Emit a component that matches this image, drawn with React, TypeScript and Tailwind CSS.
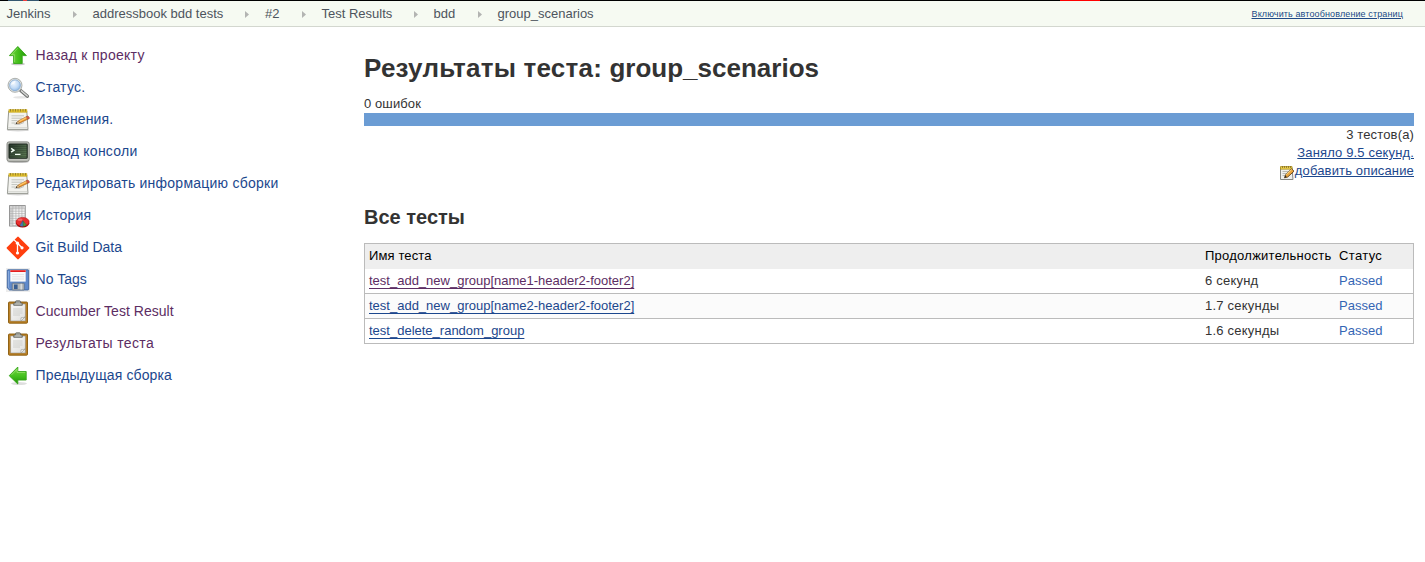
import type { ReactNode } from 'react';

function UpArrow() {
  return (
    <svg className="size-6" viewBox="0 0 24 24">
      <defs>
        <linearGradient id="green-up" x1="0" y1="0" x2="1" y2="0">
          <stop offset="0" stopColor="#7bd548" />
          <stop offset="0.5" stopColor="#45c01c" />
          <stop offset="1" stopColor="#239b08" />
        </linearGradient>
      </defs>
      <ellipse cx="12" cy="20" rx="7" ry="1.3" fill="#000" opacity="0.22" />
      <path d="M11.8 2.5 20.4 11.6H16.2V19.5H7.6V11.6H3.4Z" fill="url(#green-up)" stroke="#35a51a" strokeWidth="0.9" strokeLinejoin="round" />
      <path d="M11.8 4.2 5.6 10.7H8.6V18" fill="none" stroke="#b1ef86" strokeWidth="0.7" opacity="0.7" />
    </svg>
  );
}

function LeftArrow() {
  return (
    <svg className="size-6" viewBox="0 0 24 24">
      <defs>
        <linearGradient id="green-left" x1="0" y1="0" x2="0" y2="1">
          <stop offset="0" stopColor="#7bd648" />
          <stop offset="0.55" stopColor="#43c01d" />
          <stop offset="1" stopColor="#219107" />
        </linearGradient>
      </defs>
      <ellipse cx="13" cy="19.6" rx="8" ry="1.5" fill="#000" opacity="0.13" />
      <path d="M3.2 11.7 11.8 3V7.5H20.2V16H11.8V20Z" fill="url(#green-left)" stroke="#36a51a" strokeWidth="0.9" strokeLinejoin="round" />
      <path d="M5.2 11.2 11 5.3V8.4H19.2" fill="none" stroke="#b1ef86" strokeWidth="0.7" opacity="0.8" />
    </svg>
  );
}

function Magnifier() {
  return (
    <svg className="size-6" viewBox="0 0 24 24">
      <defs>
        <radialGradient id="lens" cx="0.4" cy="0.35" r="0.7">
          <stop offset="0" stopColor="#eef6ff" />
          <stop offset="0.6" stopColor="#c1daf5" />
          <stop offset="1" stopColor="#8bb6e6" />
        </radialGradient>
      </defs>
      <ellipse cx="15" cy="21.3" rx="8" ry="1.3" fill="#000" opacity="0.1" />
      <path d="M14.6 14.5 21.4 20.3" stroke="#6c6e6c" strokeWidth="3.2" strokeLinecap="round" />
      <path d="M15.4 14.9 21.3 20" stroke="#d4d5d3" strokeWidth="1.5" strokeLinecap="round" />
      <circle cx="9" cy="9.3" r="7" fill="#dfe2e0" stroke="#9da19e" strokeWidth="0.8" />
      <circle cx="9" cy="9.3" r="5.4" fill="url(#lens)" stroke="#7ea5d0" strokeWidth="0.7" />
      <path d="M4.8 8.9Q6 5.1 9.8 4.8Q9 8.1 4.8 8.9Z" fill="#fff" opacity="0.75" />
    </svg>
  );
}

function Notepad() {
  return (
    <svg className="size-6" viewBox="0 0 24 24">
      <ellipse cx="12" cy="22.4" rx="11" ry="1" fill="#000" opacity="0.14" />
      <path d="M2.7 3H20.8L22 21.6H1.4Z" fill="#f3f3ef" stroke="#8b8d87" strokeWidth="0.9" strokeLinejoin="round" />
      <path d="M1.6 19.8H21.8" stroke="#c4c5c0" strokeWidth="0.8" />
      <path d="M2.8 1.5H21V4.4H2.8Z" fill="#e3c22d" stroke="#c29f12" strokeWidth="0.4" />
      <path d="M4.5 1V3.5M7 1V3.5M9.5 1V3.5M12 1V3.5M14.5 1V3.5M17 1V3.5M19.5 1V3.5" stroke="#8c7728" strokeWidth="0.8" />
      <path d="M5.5 7.8H18M5.5 10.2H16M5.5 12.6H11.5M5.5 15H9.5" stroke="#b5b7b1" strokeWidth="0.8" />
      <path d="M8.5 16.3Q13 17.5 18 14.5" stroke="#888a85" strokeWidth="1" fill="none" opacity="0.45" />
      <path d="M10.4 15.3 12.3 12.9 21.4 8.2 22.8 10.7 13.5 15.2Z" fill="#ee982c" stroke="#955716" strokeWidth="0.6" />
      <path d="M12.5 13.2 21.4 8.6 21.9 9.6 12.9 14.2Z" fill="#ffca70" />
      <path d="M20.3 8.8 21.9 8Q23.6 8.8 23.4 10.4L21.6 11.3Z" fill="#d95b49" stroke="#93392f" strokeWidth="0.4" />
      <path d="M10.2 15.4 12.3 12.9 13.5 15.2Z" fill="#ecd2a1" stroke="#80582f" strokeWidth="0.4" />
      <circle cx="10.5" cy="15.2" r="0.6" fill="#222" />
    </svg>
  );
}

function Terminal() {
  return (
    <svg className="size-6" viewBox="0 0 24 24">
      <defs>
        <linearGradient id="screen" x1="0" y1="0" x2="1" y2="0.5">
          <stop offset="0" stopColor="#26352b" />
          <stop offset="1" stopColor="#55714f" />
        </linearGradient>
      </defs>
      <ellipse cx="12" cy="21.8" rx="11" ry="1.3" fill="#000" opacity="0.25" />
      <rect x="1" y="1.9" width="22.2" height="19.4" rx="2" fill="#c5c7c1" stroke="#7c7e78" strokeWidth="0.9" />
      <rect x="3" y="4" width="18.2" height="14.2" rx="0.7" fill="url(#screen)" stroke="#1a241c" strokeWidth="1.1" />
      <path d="M3.5 6.5H20.7M3.5 8.5H20.7M3.5 10.5H20.7M3.5 12.5H20.7M3.5 14.5H20.7M3.5 16.5H20.7" stroke="#10190f" strokeWidth="0.7" opacity="0.3" />
      <path d="M5.1 8.3 7.9 10.2 5.1 12.1" fill="none" stroke="#f4fff5" strokeWidth="1.5" />
      <path d="M9 14.4H14.5" stroke="#f4fff5" strokeWidth="1.2" />
    </svg>
  );
}

function History() {
  return (
    <svg className="size-6" viewBox="0 0 24 24">
      <rect x="3.6" y="1.6" width="15.6" height="20.4" fill="#f5f5f5" stroke="#858585" strokeWidth="0.9" />
      <path d="M4 2H18.8V4.5H4ZM4 2H6.7V21.6H4Z" fill="#d2d2d2" />
      <path d="M4 4.8H19M4 7.2H19M4 9.6H19M4 12H19M4 14.4H19M4 16.8H19M4 19.2H19M6.9 2V22M9.9 2V22M12.9 2V22M15.9 2V22" stroke="#aaa" strokeWidth="0.6" />
      <ellipse cx="16.6" cy="19.2" rx="6.6" ry="4.2" fill="#a40000" />
      <ellipse cx="16.6" cy="17.9" rx="6.6" ry="4.5" fill="#e83030" stroke="#a90707" strokeWidth="0.5" />
      <path d="M16.8 16.8 20.5 21Q18.8 22.3 17 22.3Z" fill="#4f9b3d" stroke="#2d6a29" strokeWidth="0.4" />
      <path d="M16.8 16.8 17 22.3Q15.3 22.5 13.8 21.8Z" fill="#4578b7" stroke="#284f88" strokeWidth="0.4" />
      <ellipse cx="14" cy="15.7" rx="2.6" ry="1.2" fill="#ff8989" opacity="0.6" />
    </svg>
  );
}

function Git() {
  return (
    <svg className="size-6" viewBox="0 0 24 24">
      <rect x="3.7" y="3.7" width="16.6" height="16.6" rx="1" fill="#ff3f0f" transform="rotate(45 12 12)" />
      <path d="M7.9 3.6 11.5 7.2V17M11.5 7.2 16 11.7" fill="none" stroke="#fff" strokeWidth="1.3" />
      <circle cx="11.5" cy="7.2" r="1.6" fill="#fff" />
      <circle cx="16" cy="11.8" r="1.6" fill="#fff" />
      <circle cx="11.5" cy="17" r="1.6" fill="#fff" />
    </svg>
  );
}

function Floppy() {
  return (
    <svg className="size-6" viewBox="0 0 24 24">
      <rect width="24" height="24" fill="#ececec" />
      <path d="M2 1.8H22Q22.7 1.8 22.7 2.6V21.2Q22.7 22 22 22H3.5L1.3 20V2.6Q1.3 1.8 2 1.8Z" fill="#608acb" stroke="#345b96" strokeWidth="0.8" />
      <path d="M2.4 3V19.2L4 20.8" fill="none" stroke="#a9c5ea" strokeWidth="0.6" />
      <rect x="4.3" y="2" width="15.4" height="11.6" fill="#fafafa" />
      <rect x="4.3" y="2.2" width="15.4" height="1.8" fill="#e51d1d" />
      <path d="M6 6.6H18M6 8.8H18M6 11H18" stroke="#d0d3d6" strokeWidth="0.6" />
      <rect x="6.2" y="15.2" width="12" height="6.8" rx="0.5" fill="#b4b8bb" stroke="#53667c" strokeWidth="0.7" />
      <rect x="8" y="16.5" width="3.6" height="4.6" fill="#385d91" />
      <path d="M15.2 15.7V21.5" stroke="#dfe3e4" strokeWidth="1.2" />
    </svg>
  );
}

function Clipboard({ id }: { id: string }) {
  return (
    <svg className="size-6" viewBox="0 0 24 24">
      <defs>
        <linearGradient id={id} x1="0" y1="0" x2="1" y2="1">
          <stop offset="0" stopColor="#fafafa" />
          <stop offset="1" stopColor="#dededb" />
        </linearGradient>
      </defs>
      <rect x="2.5" y="2" width="19" height="21.2" rx="0.9" fill="#bb8126" stroke="#875809" strokeWidth="0.9" />
      <path d="M4.6 4H19.4V21H4.6Z" fill={`url(#${id})`} stroke="#858681" strokeWidth="0.5" />
      <path d="M7 9H16.5M7 11H16.5M7 13H16.5M7 15H14" stroke="#cccdc9" strokeWidth="0.9" />
      <path d="M19.2 16.8 15 21V17.8Q17.2 18.2 19.2 16.8Z" fill="#fff" stroke="#8d8e89" strokeWidth="0.6" />
      <path d="M7.7 5.3V3.7Q7.7 3 8.6 3H9.5V1.8Q9.5 0.8 10.4 0.8H13.6Q14.5 0.8 14.5 1.8V3H15.4Q16.3 3 16.3 3.7V5.3Z" fill="#a0a29c" stroke="#5f615d" strokeWidth="0.8" />
      <path d="M8.6 4H15.4" stroke="#cfd1cc" strokeWidth="0.7" />
    </svg>
  );
}

function DescriptionIcon() {
  return (
    <svg className="size-4" viewBox="0 0 16 16">
      <path d="M1.5 2.5H13L14 14.5H1.5Z" fill="#eeeeeb" stroke="#858681" />
      <path d="M1.5 1.5H13V4.2H1.5Z" fill="#ecd04f" stroke="#a88a13" strokeWidth="0.7" />
      <path d="M3.5 1V3M5.5 1V3M7.5 1V3M9.5 1V3M11.5 1V3" stroke="#776321" strokeWidth="0.7" />
      <path d="M3.5 6.5H9M3.5 8.5H7.5M3.5 10.5H6" stroke="#aaaca7" strokeWidth="0.8" />
      <path d="M5.5 12.8 6.6 9.8 12.6 3.8 15 6.2 8.7 12Z" fill="#eaa53d" stroke="#5c4018" strokeWidth="0.9" />
      <path d="M7.2 9.7 12.8 4.4" stroke="#ffdc88" strokeWidth="0.9" />
      <path d="M5.5 12.8 6.3 10.6 7.7 12Z" fill="#292521" />
    </svg>
  );
}

const crumbs = [
  { label: 'Jenkins', width: 'w-[86px]' },
  { label: 'addressbook bdd tests', width: 'w-[172.5px]' },
  { label: '#2', width: 'w-[56.5px]' },
  { label: 'Test Results', width: 'w-[112px]' },
  { label: 'bdd', width: 'w-[64px]' },
];

function Breadcrumbs() {
  return (
    <header className="h-[27px] border-t border-b border-t-black border-b-[#d3d7cf] bg-[#f6faf2]">
      <div className="relative flex h-full items-center justify-between pl-[6.5px] pr-[22px]">
        <span className="absolute -top-px left-[8px] h-px w-[31px] bg-[#35576f]" />
        <span className="absolute -top-px left-[23px] h-px w-[4px] bg-[#ef3d3d]" />
        <span className="absolute -top-px left-[1060px] h-px w-10 bg-[#ff0000]" />
        <nav className="flex items-center text-[13px] leading-[26px] text-[#4d545d]">
          {crumbs.map((crumb) => (
            <span key={crumb.label} className={`flex items-center justify-between whitespace-nowrap pr-[16px] ${crumb.width}`}>
              <a>{crumb.label}</a>
              <svg className="mt-px h-[7px] w-1" viewBox="0 0 4 7"><path d="M0 0 4 3.5 0 7Z" fill="#b3b4b2" /></svg>
            </span>
          ))}
          <a>group_scenarios</a>
        </nav>
        <a className="text-[9px] leading-[14px] tracking-[0.12px] text-[#204a87] underline">Включить автообновление страниц</a>
      </div>
    </header>
  );
}

const tasks: { label: string; icon: ReactNode; tracking: string; visited?: boolean }[] = [
  { label: 'Назад к проекту', icon: <UpArrow />, tracking: 'tracking-[0.29px]', visited: true },
  { label: 'Статус.', icon: <Magnifier />, tracking: 'tracking-[0.22px]' },
  { label: 'Изменения.', icon: <Notepad />, tracking: 'tracking-[0.12px]' },
  { label: 'Вывод консоли', icon: <Terminal />, tracking: 'tracking-[0.25px]' },
  { label: 'Редактировать информацию сборки', icon: <Notepad />, tracking: 'tracking-[0.24px]' },
  { label: 'История', icon: <History />, tracking: 'tracking-[0.2px]' },
  { label: 'Git Build Data', icon: <Git />, tracking: 'tracking-normal' },
  { label: 'No Tags', icon: <Floppy />, tracking: 'tracking-normal' },
  { label: 'Cucumber Test Result', icon: <Clipboard id="paper-cucumber" />, tracking: 'tracking-[0.03px]', visited: true },
  { label: 'Результаты теста', icon: <Clipboard id="paper-results" />, tracking: 'tracking-[0.36px]', visited: true },
  { label: 'Предыдущая сборка', icon: <LeftArrow />, tracking: 'tracking-[0.12px]' },
];

const tests = [
  { name: 'test_add_new_group[name1-header2-footer2]', duration: '6 секунд', visited: true },
  { name: 'test_add_new_group[name2-header2-footer2]', duration: '1.7 секунды', visited: false },
  { name: 'test_delete_random_group', duration: '1.6 секунды', visited: false },
];

export default function App() {
  return (
    <div className="min-h-[562px] bg-white font-['Liberation_Sans',Arial,sans-serif] text-[13px] text-[#333]">
      <Breadcrumbs />
      <div className="flex">
        <aside className="w-[364px] shrink-0 pl-1.5 pt-3">
          {tasks.map((task) => (
            <div key={task.label} className="flex h-8 items-center gap-[5.6px] text-[14px]">
              <span className="mt-0.5">{task.icon}</span>
              <a className={`${task.tracking} ${task.visited ? 'text-[#5c2d63]' : 'text-[#1c478d]'}`}>{task.label}</a>
            </div>
          ))}
        </aside>
        <main className="w-[1050px] pt-[26px]">
          <h1 className="text-[26px] leading-[30px] font-bold">
            <span className="tracking-[0.22px]">Результаты теста: </span>group_scenarios
          </h1>
          <div className="mt-[12px] h-[18px] leading-[18px] tracking-[0.1px]">0 ошибок</div>
          <div className="h-[13px] bg-[#6b9cd4]" />
          <div className="flex flex-col items-end leading-[18px] tracking-[0.15px]">
            <span>3 тестов(а)</span>
            <a className="text-[#1c478d] underline">Заняло 9.5 секунд.</a>
            <a className="flex text-[#1c478d] underline"><span className="pt-[3px]"><DescriptionIcon /></span>добавить описание</a>
          </div>
          <h2 className="mt-[24px] text-[20px] leading-6 font-bold">Все тесты</h2>
          <table className="mt-[14px] w-full table-fixed border-collapse border border-[#bbb] leading-[18px]">
            <colgroup>
              <col className="w-[836.5px]" />
              <col className="w-[134px]" />
              <col />
            </colgroup>
            <thead>
              <tr className="h-[25px] bg-[#eee] text-left text-black">
                <th className="px-1 font-normal tracking-[0.12px]">Имя теста</th>
                <th className="px-1 font-normal whitespace-nowrap tracking-[0.25px]">Продолжительность</th>
                <th className="px-1 font-normal tracking-[0.35px]">Статус</th>
              </tr>
            </thead>
            <tbody>
              {tests.map((test, index) => (
                <tr key={test.name} className={`h-[25px] border-b border-[#bbb] ${index === 1 ? 'bg-[#fbfbfb]' : 'bg-white'}`}>
                  <td className="px-1"><a className={`underline underline-offset-3 ${test.visited ? 'text-[#5c2d63]' : 'text-[#1c478d]'}`}>{test.name}</a></td>
                  <td className="px-1 tracking-[0.22px]">{test.duration}</td>
                  <td className="px-1 text-[#3465b4]">Passed</td>
                </tr>
              ))}
            </tbody>
          </table>
        </main>
      </div>
    </div>
  );
}
